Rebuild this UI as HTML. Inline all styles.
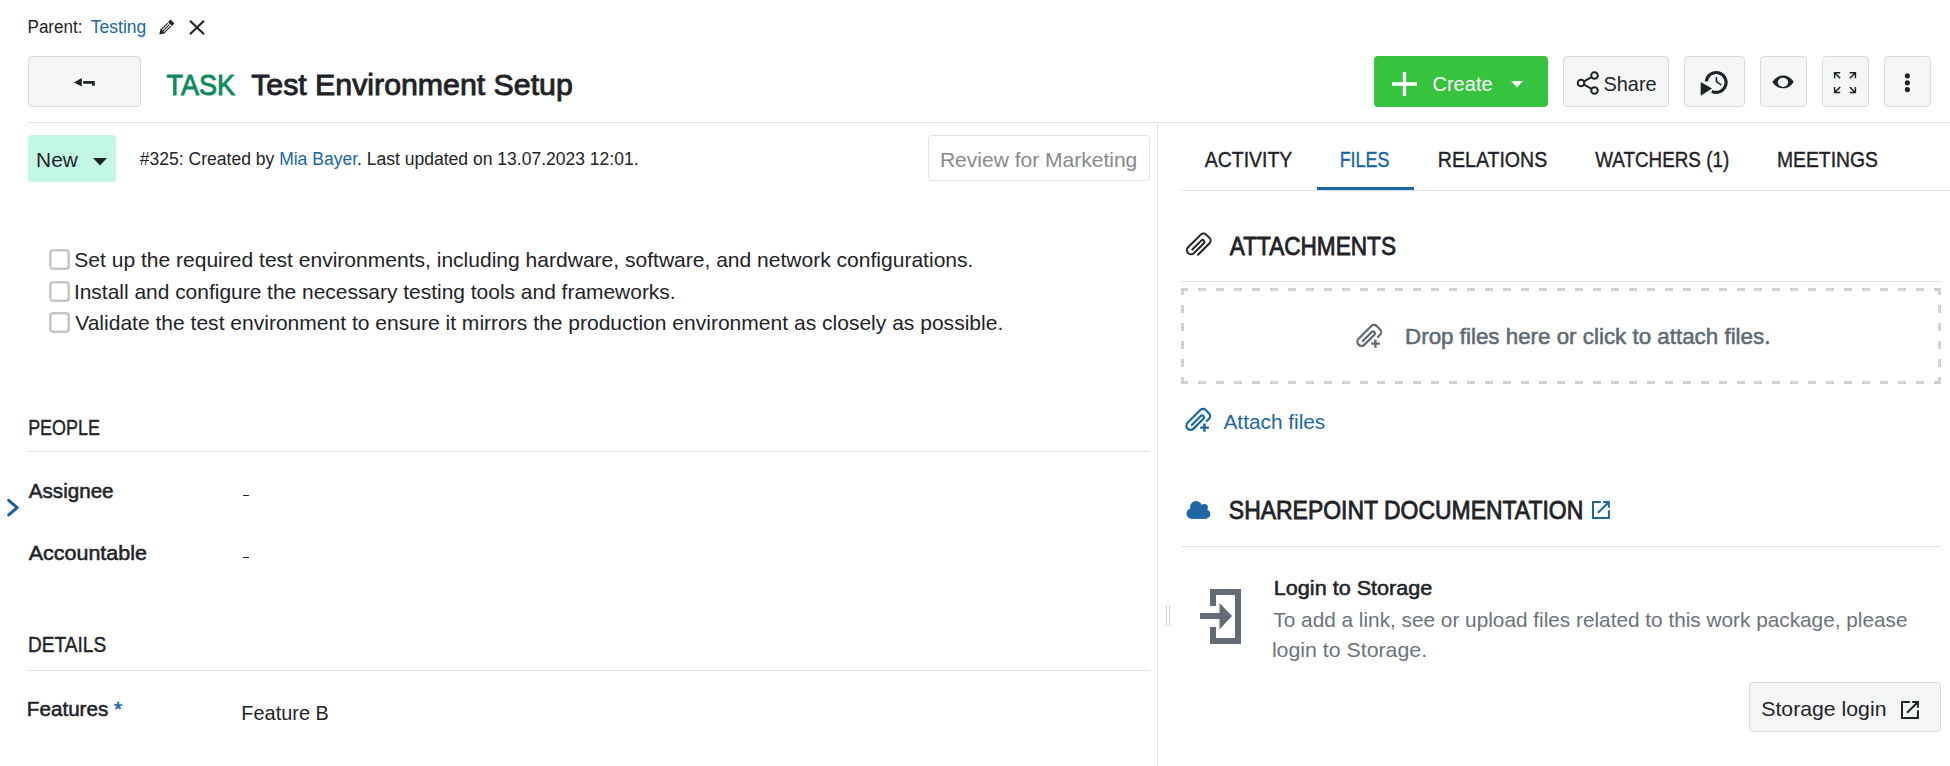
<!DOCTYPE html>
<html><head><meta charset="utf-8">
<style>
html,body{margin:0;padding:0;background:#fff;}
body{width:1950px;height:766px;overflow:hidden;position:relative;font-family:"Liberation Sans",sans-serif;color:#1f2328;}
.t{position:absolute;white-space:pre;line-height:1;}
.b{font-weight:bold;}
.lnk{color:#1a67a3;}
.btn{position:absolute;box-sizing:border-box;background:#f5f7f7;border:1px solid #d9dcde;border-radius:4px;}
.hl{position:absolute;height:1px;background:#dfe3e8;}
svg{position:absolute;overflow:visible;}
.cb{position:absolute;box-sizing:border-box;width:21px;height:21px;border:2.5px solid #c3c5ca;border-radius:3px;}
</style></head><body>

<!-- parent line -->
<svg style="left:150px;top:14px" width="30" height="26" viewBox="0 0 30 26"><g transform="matrix(0.7071,-0.7071,0.7071,0.7071,9.3,20.6)" fill="#1f2328"><path d="M0 0L4.2 -2.75V2.75Z"/><rect x="4.2" y="-2.75" width="9.9" height="1.15"/><rect x="4.2" y="-0.55" width="9.9" height="1.1"/><rect x="4.2" y="1.6" width="9.9" height="1.15"/><rect x="4.2" y="-2.75" width="1" height="5.5"/><rect x="15" y="-2.75" width="3.6" height="5.5"/></g></svg>
<svg style="left:189px;top:20px" width="16" height="15" viewBox="0 0 16 15"><path d="M1 0.8L15 14.2M15 0.8L1 14.2" stroke="#1f2328" stroke-width="2.1"/></svg>

<!-- back button -->
<div class="btn" style="left:28px;top:56px;width:113px;height:51px;"></div>
<svg style="left:66px;top:70px" width="36" height="24" viewBox="0 0 36 24"><path d="M7.8 12.4L15.8 8V16.6z" fill="#1f2328"/><path d="M17.2 12.4H27.4V15.8" fill="none" stroke="#1f2328" stroke-width="2.8"/></svg>

<!-- title -->

<!-- toolbar buttons -->
<div style="position:absolute;left:1374px;top:56px;width:174px;height:51px;background:#36c43f;border-radius:4px;"></div>
<svg style="left:1392px;top:72px" width="25" height="24" viewBox="0 0 25 24"><path d="M12.5 0v24M0 12h25" stroke="#fff" stroke-width="3.4"/></svg>
<svg style="left:1511px;top:80.5px" width="12" height="7" viewBox="0 0 12 7"><path d="M0 0h12L6 6.5z" fill="#fff"/></svg>

<div class="btn" style="left:1563px;top:56px;width:106px;height:51px;"></div>
<svg style="left:1576px;top:71px" width="24" height="24" viewBox="0 0 24 24"><g fill="none" stroke="#1f2328" stroke-width="2"><circle cx="18.5" cy="4.5" r="3.3"/><circle cx="5" cy="12" r="3.3"/><circle cx="18.5" cy="19.5" r="3.3"/><path d="M8 10.3l7.6-4.2M8 13.7l7.6 4.2"/></g></svg>

<div class="btn" style="left:1684px;top:56px;width:61px;height:51px;"></div>
<svg style="left:1690px;top:62px" width="50" height="40" viewBox="0 0 50 40"><path d="M16.36 19.3A9.9 9.9 0 1 1 21.86 29.3" fill="none" stroke="#1f2328" stroke-width="3.1"/><path d="M10.7 19.9V33.7L22 26.6z" fill="#1f2328"/><path d="M26.4 15.2V19.6L31.3 22.8" fill="none" stroke="#1f2328" stroke-width="1.6"/></svg>

<div class="btn" style="left:1760px;top:56px;width:47px;height:51px;"></div>
<svg style="left:1760px;top:62px" width="47" height="40" viewBox="0 0 47 40"><path d="M12.3 19.9C15.5 15.3 19 13.5 23 13.5S30.5 15.3 33.7 19.9C30.5 24.5 27 26.3 23 26.3S15.5 24.5 12.3 19.9z" fill="#1f2328"/><ellipse cx="23" cy="20.3" rx="5.1" ry="4.6" fill="#f5f7f7"/></svg>

<div class="btn" style="left:1822px;top:56px;width:47px;height:51px;"></div>
<svg style="left:1822px;top:62px" width="47" height="40" viewBox="0 0 47 40"><path d="M12.6 16.299999999999997V10.7H18.2M12.6 10.7L18.2 16.299999999999997M33.4 16.299999999999997V10.7H27.799999999999997M33.4 10.7L27.799999999999997 16.299999999999997M12.6 25.0V30.6H18.2M12.6 30.6L18.2 25.0M33.4 25.0V30.6H27.799999999999997M33.4 30.6L27.799999999999997 25.0" fill="none" stroke="#1f2328" stroke-width="1.5"/></svg>

<div class="btn" style="left:1884px;top:56px;width:47px;height:51px;"></div>
<svg style="left:1884px;top:62px" width="47" height="40" viewBox="0 0 47 40"><g fill="#1f2328"><circle cx="23.4" cy="13.8" r="2.6"/><circle cx="23.4" cy="20.8" r="2.6"/><circle cx="23.4" cy="27.6" r="2.6"/></g></svg>

<!-- header divider -->
<div class="hl" style="left:28px;top:122px;width:1922px;"></div>

<!-- status row -->
<div style="position:absolute;left:28px;top:135px;width:88px;height:47px;background:#c1f7e3;border-radius:4px;"></div>
<svg style="left:92.5px;top:158px" width="14" height="7.5" viewBox="0 0 14 7.5"><path d="M0 0h14L7 7.5z" fill="#1f2328"/></svg>

<div style="position:absolute;box-sizing:border-box;left:928px;top:135px;width:222px;height:46px;border:1px solid #dfe3e8;border-radius:4px;"></div>

<!-- vertical divider -->
<div style="position:absolute;left:1157px;top:123px;width:1px;height:643px;background:#dfe3e8;"></div>

<!-- checklist -->
<svg style="left:49px;top:249px" width="21" height="21" viewBox="0 0 21 21"><rect x="1.3" y="1.3" width="18.4" height="18.4" rx="2.6" fill="none" stroke="#c4c6ca" stroke-width="2.6"/></svg>
<svg style="left:49px;top:281px" width="21" height="21" viewBox="0 0 21 21"><rect x="1.3" y="1.3" width="18.4" height="18.4" rx="2.6" fill="none" stroke="#c4c6ca" stroke-width="2.6"/></svg>
<svg style="left:49px;top:312px" width="21" height="21" viewBox="0 0 21 21"><rect x="1.3" y="1.3" width="18.4" height="18.4" rx="2.6" fill="none" stroke="#c4c6ca" stroke-width="2.6"/></svg>

<!-- people -->
<div class="hl" style="left:28px;top:451px;width:1122px;"></div>
<svg style="left:0px;top:490px" width="30" height="35" viewBox="0 0 30 35"><path d="M8.7 10.3L17.2 17.6L8.7 24.9" fill="none" stroke="#1a5f98" stroke-width="3" stroke-linecap="round" stroke-linejoin="round"/></svg>

<div style="position:absolute;left:243px;top:495px;width:6px;height:1.1px;background:#1f2328"></div>
<div style="position:absolute;left:243px;top:557px;width:6px;height:1.1px;background:#1f2328"></div>
<!-- details -->
<div class="hl" style="left:28px;top:670px;width:1122px;"></div>

<!-- right pane: tabs -->
<div class="hl" style="left:1181px;top:190px;width:769px;"></div>
<div style="position:absolute;left:1317px;top:187px;width:97px;height:3px;background:#1a67a3;"></div>

<!-- attachments -->
<svg style="left:1180px;top:226px" width="36" height="36" viewBox="0 0 36 36"><path d="M12.3 7.6L12.3 -8.65A3.8 3.8 0 0 0 8.50 -12.45L3.8 -12.45A3.8 3.8 0 0 0 0 -8.65L0 9.3A4.15 4.15 0 0 0 8.3 9.3L8.3 -4.7A1.875 1.875 0 0 0 4.55 -4.7L4.55 7.9" fill="none" stroke="#1f2328" stroke-width="2.0" stroke-linecap="round" transform="matrix(0.7071,0.7071,-0.7071,0.7071,14.7,14.7)"/></svg>
<div class="hl" style="left:1181px;top:281px;width:760px;background:#e0e0e0;"></div>
<svg style="left:1181px;top:288px" width="760" height="96" viewBox="0 0 760 96" shape-rendering="crispEdges"><g fill="#cdd3da"><rect x="0" y="0" width="7" height="3"/><rect x="753" y="0" width="7" height="3"/><rect x="0" y="93" width="7" height="3"/><rect x="753" y="93" width="7" height="3"/><rect x="0" y="0" width="3" height="7"/><rect x="757" y="0" width="3" height="7"/><rect x="0" y="89" width="3" height="7"/><rect x="757" y="89" width="3" height="7"/><rect x="16.95" y="0" width="8" height="3"/><rect x="16.95" y="93" width="8" height="3"/><rect x="34.90" y="0" width="8" height="3"/><rect x="34.90" y="93" width="8" height="3"/><rect x="52.86" y="0" width="8" height="3"/><rect x="52.86" y="93" width="8" height="3"/><rect x="70.81" y="0" width="8" height="3"/><rect x="70.81" y="93" width="8" height="3"/><rect x="88.76" y="0" width="8" height="3"/><rect x="88.76" y="93" width="8" height="3"/><rect x="106.71" y="0" width="8" height="3"/><rect x="106.71" y="93" width="8" height="3"/><rect x="124.67" y="0" width="8" height="3"/><rect x="124.67" y="93" width="8" height="3"/><rect x="142.62" y="0" width="8" height="3"/><rect x="142.62" y="93" width="8" height="3"/><rect x="160.57" y="0" width="8" height="3"/><rect x="160.57" y="93" width="8" height="3"/><rect x="178.52" y="0" width="8" height="3"/><rect x="178.52" y="93" width="8" height="3"/><rect x="196.48" y="0" width="8" height="3"/><rect x="196.48" y="93" width="8" height="3"/><rect x="214.43" y="0" width="8" height="3"/><rect x="214.43" y="93" width="8" height="3"/><rect x="232.38" y="0" width="8" height="3"/><rect x="232.38" y="93" width="8" height="3"/><rect x="250.33" y="0" width="8" height="3"/><rect x="250.33" y="93" width="8" height="3"/><rect x="268.29" y="0" width="8" height="3"/><rect x="268.29" y="93" width="8" height="3"/><rect x="286.24" y="0" width="8" height="3"/><rect x="286.24" y="93" width="8" height="3"/><rect x="304.19" y="0" width="8" height="3"/><rect x="304.19" y="93" width="8" height="3"/><rect x="322.14" y="0" width="8" height="3"/><rect x="322.14" y="93" width="8" height="3"/><rect x="340.10" y="0" width="8" height="3"/><rect x="340.10" y="93" width="8" height="3"/><rect x="358.05" y="0" width="8" height="3"/><rect x="358.05" y="93" width="8" height="3"/><rect x="376.00" y="0" width="8" height="3"/><rect x="376.00" y="93" width="8" height="3"/><rect x="393.95" y="0" width="8" height="3"/><rect x="393.95" y="93" width="8" height="3"/><rect x="411.90" y="0" width="8" height="3"/><rect x="411.90" y="93" width="8" height="3"/><rect x="429.86" y="0" width="8" height="3"/><rect x="429.86" y="93" width="8" height="3"/><rect x="447.81" y="0" width="8" height="3"/><rect x="447.81" y="93" width="8" height="3"/><rect x="465.76" y="0" width="8" height="3"/><rect x="465.76" y="93" width="8" height="3"/><rect x="483.71" y="0" width="8" height="3"/><rect x="483.71" y="93" width="8" height="3"/><rect x="501.67" y="0" width="8" height="3"/><rect x="501.67" y="93" width="8" height="3"/><rect x="519.62" y="0" width="8" height="3"/><rect x="519.62" y="93" width="8" height="3"/><rect x="537.57" y="0" width="8" height="3"/><rect x="537.57" y="93" width="8" height="3"/><rect x="555.52" y="0" width="8" height="3"/><rect x="555.52" y="93" width="8" height="3"/><rect x="573.48" y="0" width="8" height="3"/><rect x="573.48" y="93" width="8" height="3"/><rect x="591.43" y="0" width="8" height="3"/><rect x="591.43" y="93" width="8" height="3"/><rect x="609.38" y="0" width="8" height="3"/><rect x="609.38" y="93" width="8" height="3"/><rect x="627.33" y="0" width="8" height="3"/><rect x="627.33" y="93" width="8" height="3"/><rect x="645.29" y="0" width="8" height="3"/><rect x="645.29" y="93" width="8" height="3"/><rect x="663.24" y="0" width="8" height="3"/><rect x="663.24" y="93" width="8" height="3"/><rect x="681.19" y="0" width="8" height="3"/><rect x="681.19" y="93" width="8" height="3"/><rect x="699.14" y="0" width="8" height="3"/><rect x="699.14" y="93" width="8" height="3"/><rect x="717.10" y="0" width="8" height="3"/><rect x="717.10" y="93" width="8" height="3"/><rect x="735.05" y="0" width="8" height="3"/><rect x="735.05" y="93" width="8" height="3"/><rect x="0" y="17.00" width="3" height="8"/><rect x="757" y="17.00" width="3" height="8"/><rect x="0" y="35.00" width="3" height="8"/><rect x="757" y="35.00" width="3" height="8"/><rect x="0" y="53.00" width="3" height="8"/><rect x="757" y="53.00" width="3" height="8"/><rect x="0" y="71.00" width="3" height="8"/><rect x="757" y="71.00" width="3" height="8"/></g></svg>
<svg style="left:1351px;top:318px" width="36" height="36" viewBox="0 0 36 36"><path d="M12.3 -5.6L12.3 -8.65A3.8 3.8 0 0 0 8.50 -12.45L3.8 -12.45A3.8 3.8 0 0 0 0 -8.65L0 9.3A4.15 4.15 0 0 0 8.3 9.3L8.3 -4.7A1.875 1.875 0 0 0 4.55 -4.7L4.55 7.9" fill="none" stroke="#5f6a74" stroke-width="2.2" stroke-linecap="round" transform="matrix(0.7071,0.7071,-0.7071,0.7071,14.2,14.2)"/><path d="M20.2 25.6H28.9M24.4 21.4V29.8" stroke="#5f6a74" stroke-width="2.4"/></svg>

<svg style="left:1180px;top:402px" width="36" height="36" viewBox="0 0 36 36"><path d="M12.3 -5.6L12.3 -8.65A3.8 3.8 0 0 0 8.50 -12.45L3.8 -12.45A3.8 3.8 0 0 0 0 -8.65L0 9.3A4.15 4.15 0 0 0 8.3 9.3L8.3 -4.7A1.875 1.875 0 0 0 4.55 -4.7L4.55 7.9" fill="none" stroke="#1a67a3" stroke-width="2.2" stroke-linecap="round" transform="matrix(0.7071,0.7071,-0.7071,0.7071,14.2,14.2)"/><path d="M20.2 25.6H28.9M24.4 21.4V29.8" stroke="#1a67a3" stroke-width="2.4"/></svg>

<!-- sharepoint -->
<svg style="left:1182px;top:494px" width="34" height="30" viewBox="0 0 34 30"><g fill="#1f66a8"><circle cx="14.1" cy="13" r="6"/><circle cx="22.3" cy="13.5" r="3.6"/><circle cx="9.5" cy="19.6" r="5"/><circle cx="24.4" cy="20" r="3.9"/><rect x="9" y="14" width="16" height="10.9"/></g></svg>
<svg style="left:1592px;top:501px" width="18" height="18" viewBox="0 0 18 18"><path d="M8.8 1H1V16.9H16.9V9.2M11.2 1H16.9V6.8M6 11.7L16.4 1.5" fill="none" stroke="#1a67a3" stroke-width="2"/></svg>
<div class="hl" style="left:1181px;top:546px;width:760px;background:#e0e0e0;"></div>

<div style="position:absolute;left:1166px;top:605px;width:1px;height:21px;background:#d0d0d0;"></div>
<div style="position:absolute;left:1169px;top:605px;width:1px;height:21px;background:#d0d0d0;"></div>
<svg style="left:1200px;top:589px" width="42" height="55" viewBox="0 0 42 55"><path d="M13 17V3h25v49H13V38" fill="none" stroke="#636c76" stroke-width="6"/><path d="M0 24h20v6H0z" fill="#636c76"/><path d="M19.5 14L32 27 19.5 40.5z" fill="#636c76"/></svg>

<div class="btn" style="left:1749px;top:682px;width:192px;height:50px;"></div>
<svg style="left:1901px;top:701px" width="18" height="18" viewBox="0 0 18 18"><path d="M8.8 1H1V16.9H16.9V9.2M11.2 1H16.9V6.8M6 11.7L16.4 1.5" fill="none" stroke="#1f2328" stroke-width="2"/></svg>

<div class="t" id="parent" style="left:26.01px;top:17.76px;font-size:18px;color:#1f2328;transform:scaleX(0.9489);">Parent:</div>
<div class="t" id="testing" style="left:90.24px;top:17.76px;font-size:18px;color:#1a67a3;transform:scaleX(0.9708);">Testing</div>
<div class="t" id="task" style="left:164.19px;top:71.45px;font-size:29px;color:#0e8a5f;-webkit-text-stroke:0.9px #0e8a5f;transform:scaleX(0.9321);">TASK</div>
<div class="t" id="title" style="left:258.47px;top:71.45px;font-size:29px;color:#1f2328;-webkit-text-stroke:0.9px #1f2328;transform:scaleX(1.0445);">Test Environment Setup</div>
<div class="t" id="create" style="left:1430.69px;top:72.52px;font-size:21px;color:#ffffff;transform:scaleX(0.9543);">Create</div>
<div class="t" id="share" style="left:1601.88px;top:72.52px;font-size:21px;color:#1f2328;transform:scaleX(0.9506);">Share</div>
<div class="t" id="new" style="left:36.05px;top:148.72px;font-size:21px;color:#1f2328;transform:scaleX(0.9948);">New</div>
<div class="t" id="info" style="left:132.50px;top:150.36px;font-size:18px;color:#1f2328;transform:scaleX(0.9732);">#325: Created by <span style="color:#1a67a3">Mia Bayer</span>. Last updated on 13.07.2023 12:01.</div>
<div class="t" id="review" style="left:939.66px;top:149.22px;font-size:21px;color:#878a8e;transform:scaleX(1.0008);">Review for Marketing</div>
<div class="t" id="cl1" style="left:75.27px;top:249.42px;font-size:21px;color:#1f2328;transform:scaleX(1.0016);">Set up the required test environments, including hardware, software, and network configurations.</div>
<div class="t" id="cl2" style="left:73.19px;top:280.92px;font-size:21px;color:#1f2328;transform:scaleX(0.9971);">Install and configure the necessary testing tools and frameworks.</div>
<div class="t" id="cl3" style="left:75.97px;top:312.02px;font-size:21px;color:#1f2328;transform:scaleX(1.0018);">Validate the test environment to ensure it mirrors the production environment as closely as possible.</div>
<div class="t" id="people" style="left:19.86px;top:416.58px;font-size:22px;color:#1f2328;-webkit-text-stroke:0.4px #1f2328;transform:scaleX(0.8153);">PEOPLE</div>
<div class="t" id="assignee" style="left:27.95px;top:479.72px;font-size:21px;color:#1f2328;-webkit-text-stroke:0.55px #1f2328;transform:scaleX(0.9811);">Assignee</div>
<div class="t" id="accountable" style="left:29.77px;top:541.92px;font-size:21px;color:#1f2328;-webkit-text-stroke:0.55px #1f2328;transform:scaleX(1.0228);">Accountable</div>
<div class="t" id="details" style="left:22.13px;top:634.18px;font-size:22px;color:#1f2328;-webkit-text-stroke:0.4px #1f2328;transform:scaleX(0.8683);">DETAILS</div>
<div class="t" id="features" style="left:26.22px;top:698.02px;font-size:21px;color:#1f2328;-webkit-text-stroke:0.55px #1f2328;transform:scaleX(0.9826);">Features <span style="color:#1a67a3;-webkit-text-stroke-color:#1a67a3">*</span></div>
<div class="t" id="featureb" style="left:239.20px;top:702.12px;font-size:21px;color:#1f2328;transform:scaleX(0.9485);">Feature B</div>
<div class="t" id="activity" style="left:1199.40px;top:149.38px;font-size:22px;color:#1f2328;-webkit-text-stroke:0.4px #1f2328;transform:scaleX(0.8853);">ACTIVITY</div>
<div class="t" id="files" style="left:1333.98px;top:149.38px;font-size:22px;color:#1a67a3;-webkit-text-stroke:0.4px #1a67a3;transform:scaleX(0.8153);">FILES</div>
<div class="t" id="relations" style="left:1430.60px;top:149.38px;font-size:22px;color:#1f2328;-webkit-text-stroke:0.4px #1f2328;transform:scaleX(0.8888);">RELATIONS</div>
<div class="t" id="watchers" style="left:1584.12px;top:149.38px;font-size:22px;color:#1f2328;-webkit-text-stroke:0.4px #1f2328;transform:scaleX(0.8556);">WATCHERS (1)</div>
<div class="t" id="meetings" style="left:1769.91px;top:149.38px;font-size:22px;color:#1f2328;-webkit-text-stroke:0.4px #1f2328;transform:scaleX(0.8785);">MEETINGS</div>
<div class="t" id="attachments" style="left:1221.27px;top:233.84px;font-size:25px;color:#1f2328;-webkit-text-stroke:0.8px #1f2328;transform:scaleX(0.9040);">ATTACHMENTS</div>
<div class="t" id="drop" style="left:1408.09px;top:326.18px;font-size:22px;color:#5f6a74;-webkit-text-stroke:0.55px #5f6a74;transform:scaleX(1.0163);">Drop files here or click to attach files.</div>
<div class="t" id="attach" style="left:1222.76px;top:411.02px;font-size:21px;color:#1a67a3;transform:scaleX(0.9902);">Attach files</div>
<div class="t" id="sharepoint" style="left:1212.75px;top:498.44px;font-size:25px;color:#1f2328;-webkit-text-stroke:0.8px #1f2328;transform:scaleX(0.9178);">SHAREPOINT DOCUMENTATION</div>
<div class="t" id="login" style="left:1275.69px;top:576.52px;font-size:21px;color:#1f2328;-webkit-text-stroke:0.55px #1f2328;transform:scaleX(1.0283);">Login to Storage</div>
<div class="t" id="desc1" style="left:1269.92px;top:609.32px;font-size:21px;color:#6b737c;transform:scaleX(0.9895);">To add a link, see or upload files related to this work package, please</div>
<div class="t" id="desc2" style="left:1273.48px;top:639.32px;font-size:21px;color:#6b737c;transform:scaleX(1.0147);">login to Storage.</div>
<div class="t" id="storagelogin" style="left:1761.80px;top:698.02px;font-size:21px;color:#1f2328;transform:scaleX(1.0112);">Storage login</div>
</body></html>
